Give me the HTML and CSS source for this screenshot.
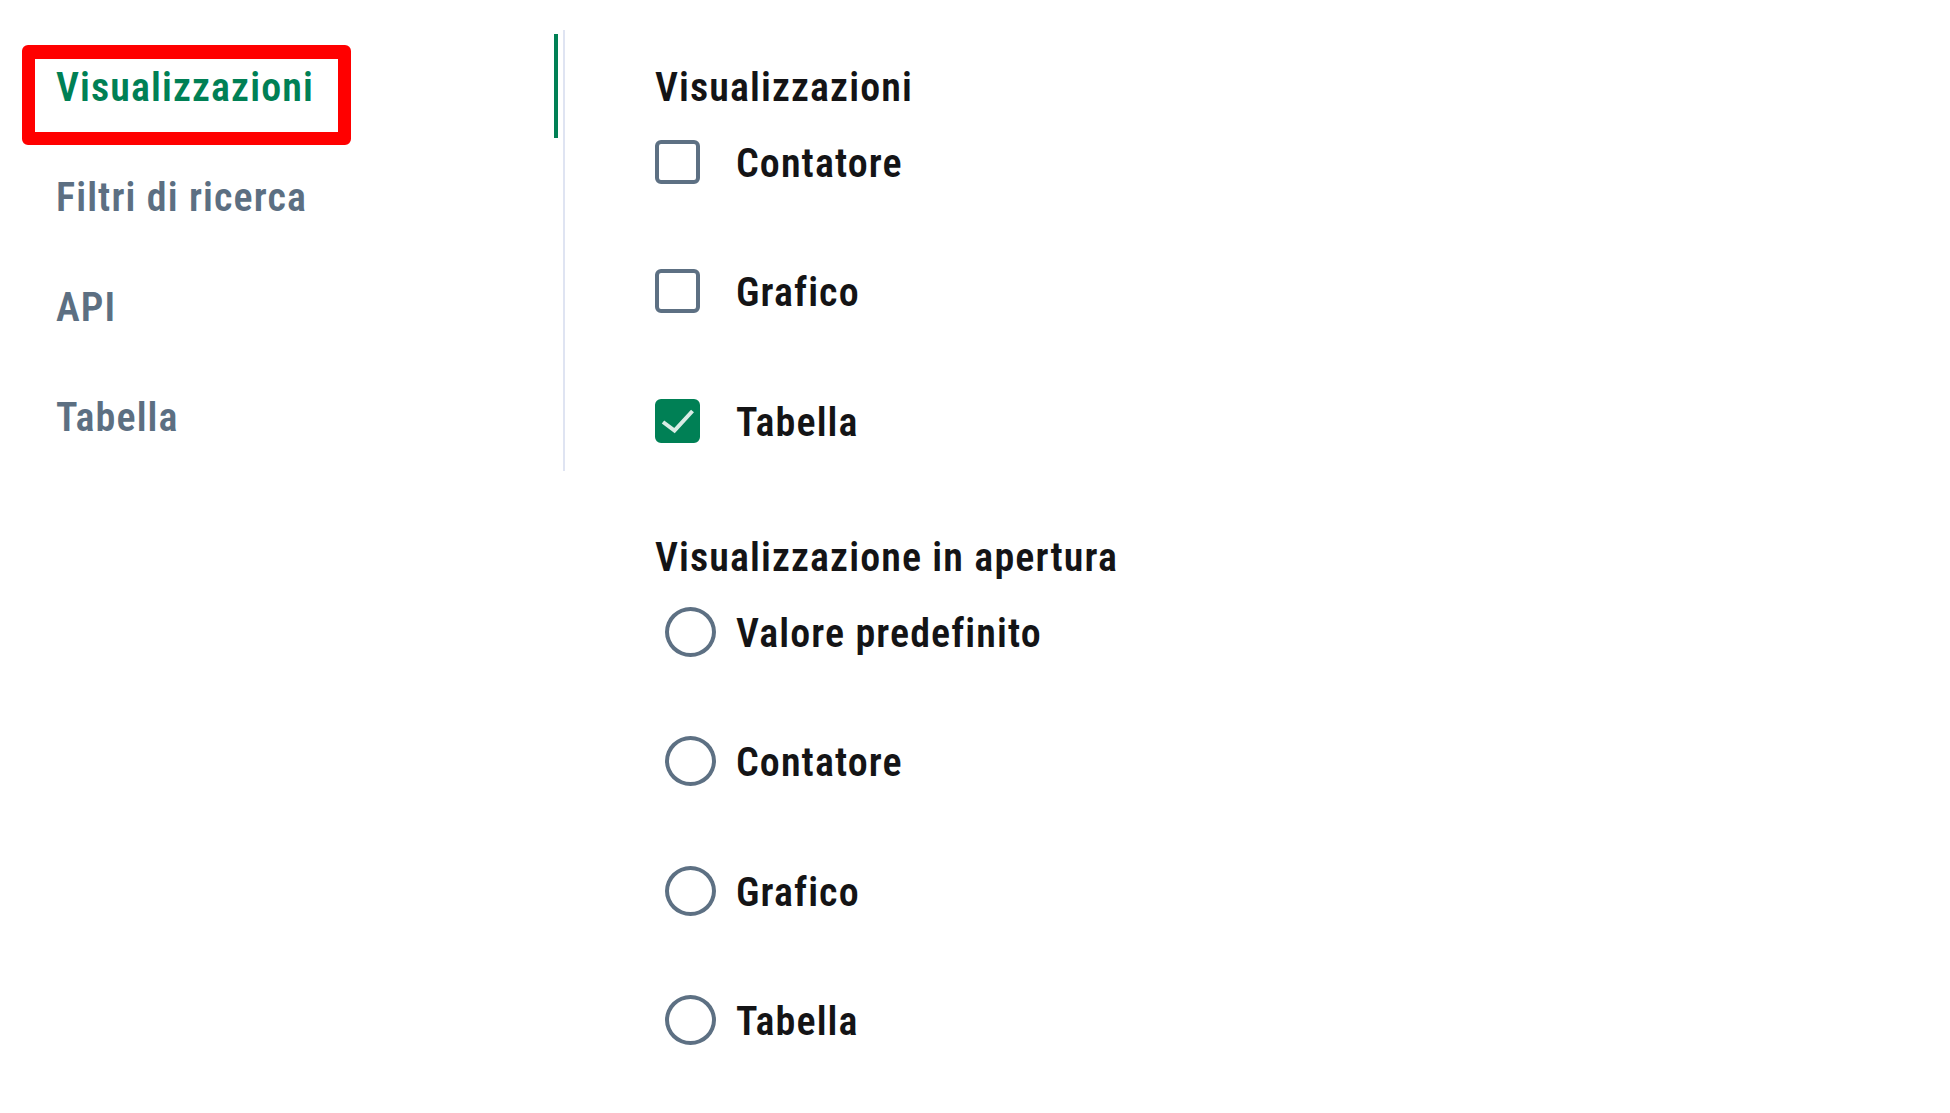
FILE: index.html
```html
<!DOCTYPE html>
<html lang="it">
<head>
<meta charset="utf-8">
<title>Impostazioni visualizzazione</title>
<link rel="stylesheet" href="styles.css">
</head>
<body>
<div class="page">
  <nav class="side-nav">
    <a class="nav-item active" href="#">
      <span class="nav-label">Visualizzazioni</span>
      <span class="highlight-box" aria-hidden="true"></span>
    </a>
    <a class="nav-item" href="#"><span class="nav-label">Filtri di ricerca</span></a>
    <a class="nav-item" href="#"><span class="nav-label">API</span></a>
    <a class="nav-item" href="#"><span class="nav-label">Tabella</span></a>
  </nav>
  <main class="content">
    <section class="group">
      <h2 class="group-title">Visualizzazioni</h2>
      <div class="options">
        <label class="option">
          <span class="control"><span class="checkbox"></span></span>
          <span class="option-label">Contatore</span>
        </label>
        <label class="option">
          <span class="control"><span class="checkbox"></span></span>
          <span class="option-label">Grafico</span>
        </label>
        <label class="option">
          <span class="control"><span class="checkbox checked">
            <svg viewBox="0 0 45 44" width="45" height="44"><path d="M8 23 L19.5 31.5 L37.5 12" fill="none" stroke="rgba(255,255,255,0.85)" stroke-width="4"/></svg>
          </span></span>
          <span class="option-label">Tabella</span>
        </label>
      </div>
    </section>
    <section class="group second">
      <h2 class="group-title">Visualizzazione in apertura</h2>
      <div class="options">
        <label class="option">
          <span class="control"><span class="radio"></span></span>
          <span class="option-label">Valore predefinito</span>
        </label>
        <label class="option">
          <span class="control"><span class="radio"></span></span>
          <span class="option-label">Contatore</span>
        </label>
        <label class="option">
          <span class="control"><span class="radio"></span></span>
          <span class="option-label">Grafico</span>
        </label>
        <label class="option">
          <span class="control"><span class="radio"></span></span>
          <span class="option-label">Tabella</span>
        </label>
      </div>
    </section>
  </main>
</div>
</body>
</html>
```

FILE: styles.css
```css
* { box-sizing: border-box; }

html, body {
  margin: 0;
  padding: 0;
  background: #ffffff;
}

body {
  font-family: "Roboto", "Open Sans", sans-serif;
  font-stretch: 75%;
  font-weight: 600;
  font-size: 40px;
  line-height: 48px;
  letter-spacing: 1.1px;
  color: #141416;
}

.page {
  display: flex;
  align-items: flex-start;
}

.side-nav {
  width: 565px;
  margin-top: 30px;
  padding: 4px 5px 3px 0;
  border-right: 2px solid #dfe4f2;
  display: flex;
  flex-direction: column;
  gap: 6px;
}

.nav-item {
  position: relative;
  height: 104px;
  display: flex;
  align-items: center;
  padding: 4px 0 0 56px;
  color: #5c6f82;
  text-decoration: none;
  border-right: 4px solid transparent;
}

.nav-item.active {
  color: #008055;
  border-right-color: #008055;
}

.highlight-box {
  position: absolute;
  left: 22px;
  top: 11px;
  width: 329px;
  height: 100px;
  border: 13px solid #ff0000;
  border-top-width: 14px;
  border-bottom-width: 13px;
  border-radius: 6px;
}

.content {
  padding: 64px 0 0 90px;
}

.group-title {
  margin: 0;
  font-size: 40px;
  line-height: 48px;
  font-weight: 600;
}

.options {
  display: flex;
  flex-direction: column;
  gap: 29.4px;
}

.option {
  height: 100px;
  display: flex;
  align-items: center;
}

.control {
  width: 81px;
  display: flex;
  align-items: center;
}

.checkbox {
  width: 45px;
  height: 44px;
  border: 4px solid #5d7083;
  border-radius: 6px;
  display: block;
  position: relative;
}

.checkbox.checked {
  background: #008055;
  border-color: #008055;
}

.checkbox.checked svg {
  position: absolute;
  left: -4px;
  top: -4px;
}

.radio {
  margin-left: 10px;
  width: 51px;
  height: 50px;
  border: 4px solid #5d7083;
  border-radius: 50%;
  display: block;
}

.option-label {
  padding-top: 4px;
}

.group.second {
  margin-top: 63px;
}
```
